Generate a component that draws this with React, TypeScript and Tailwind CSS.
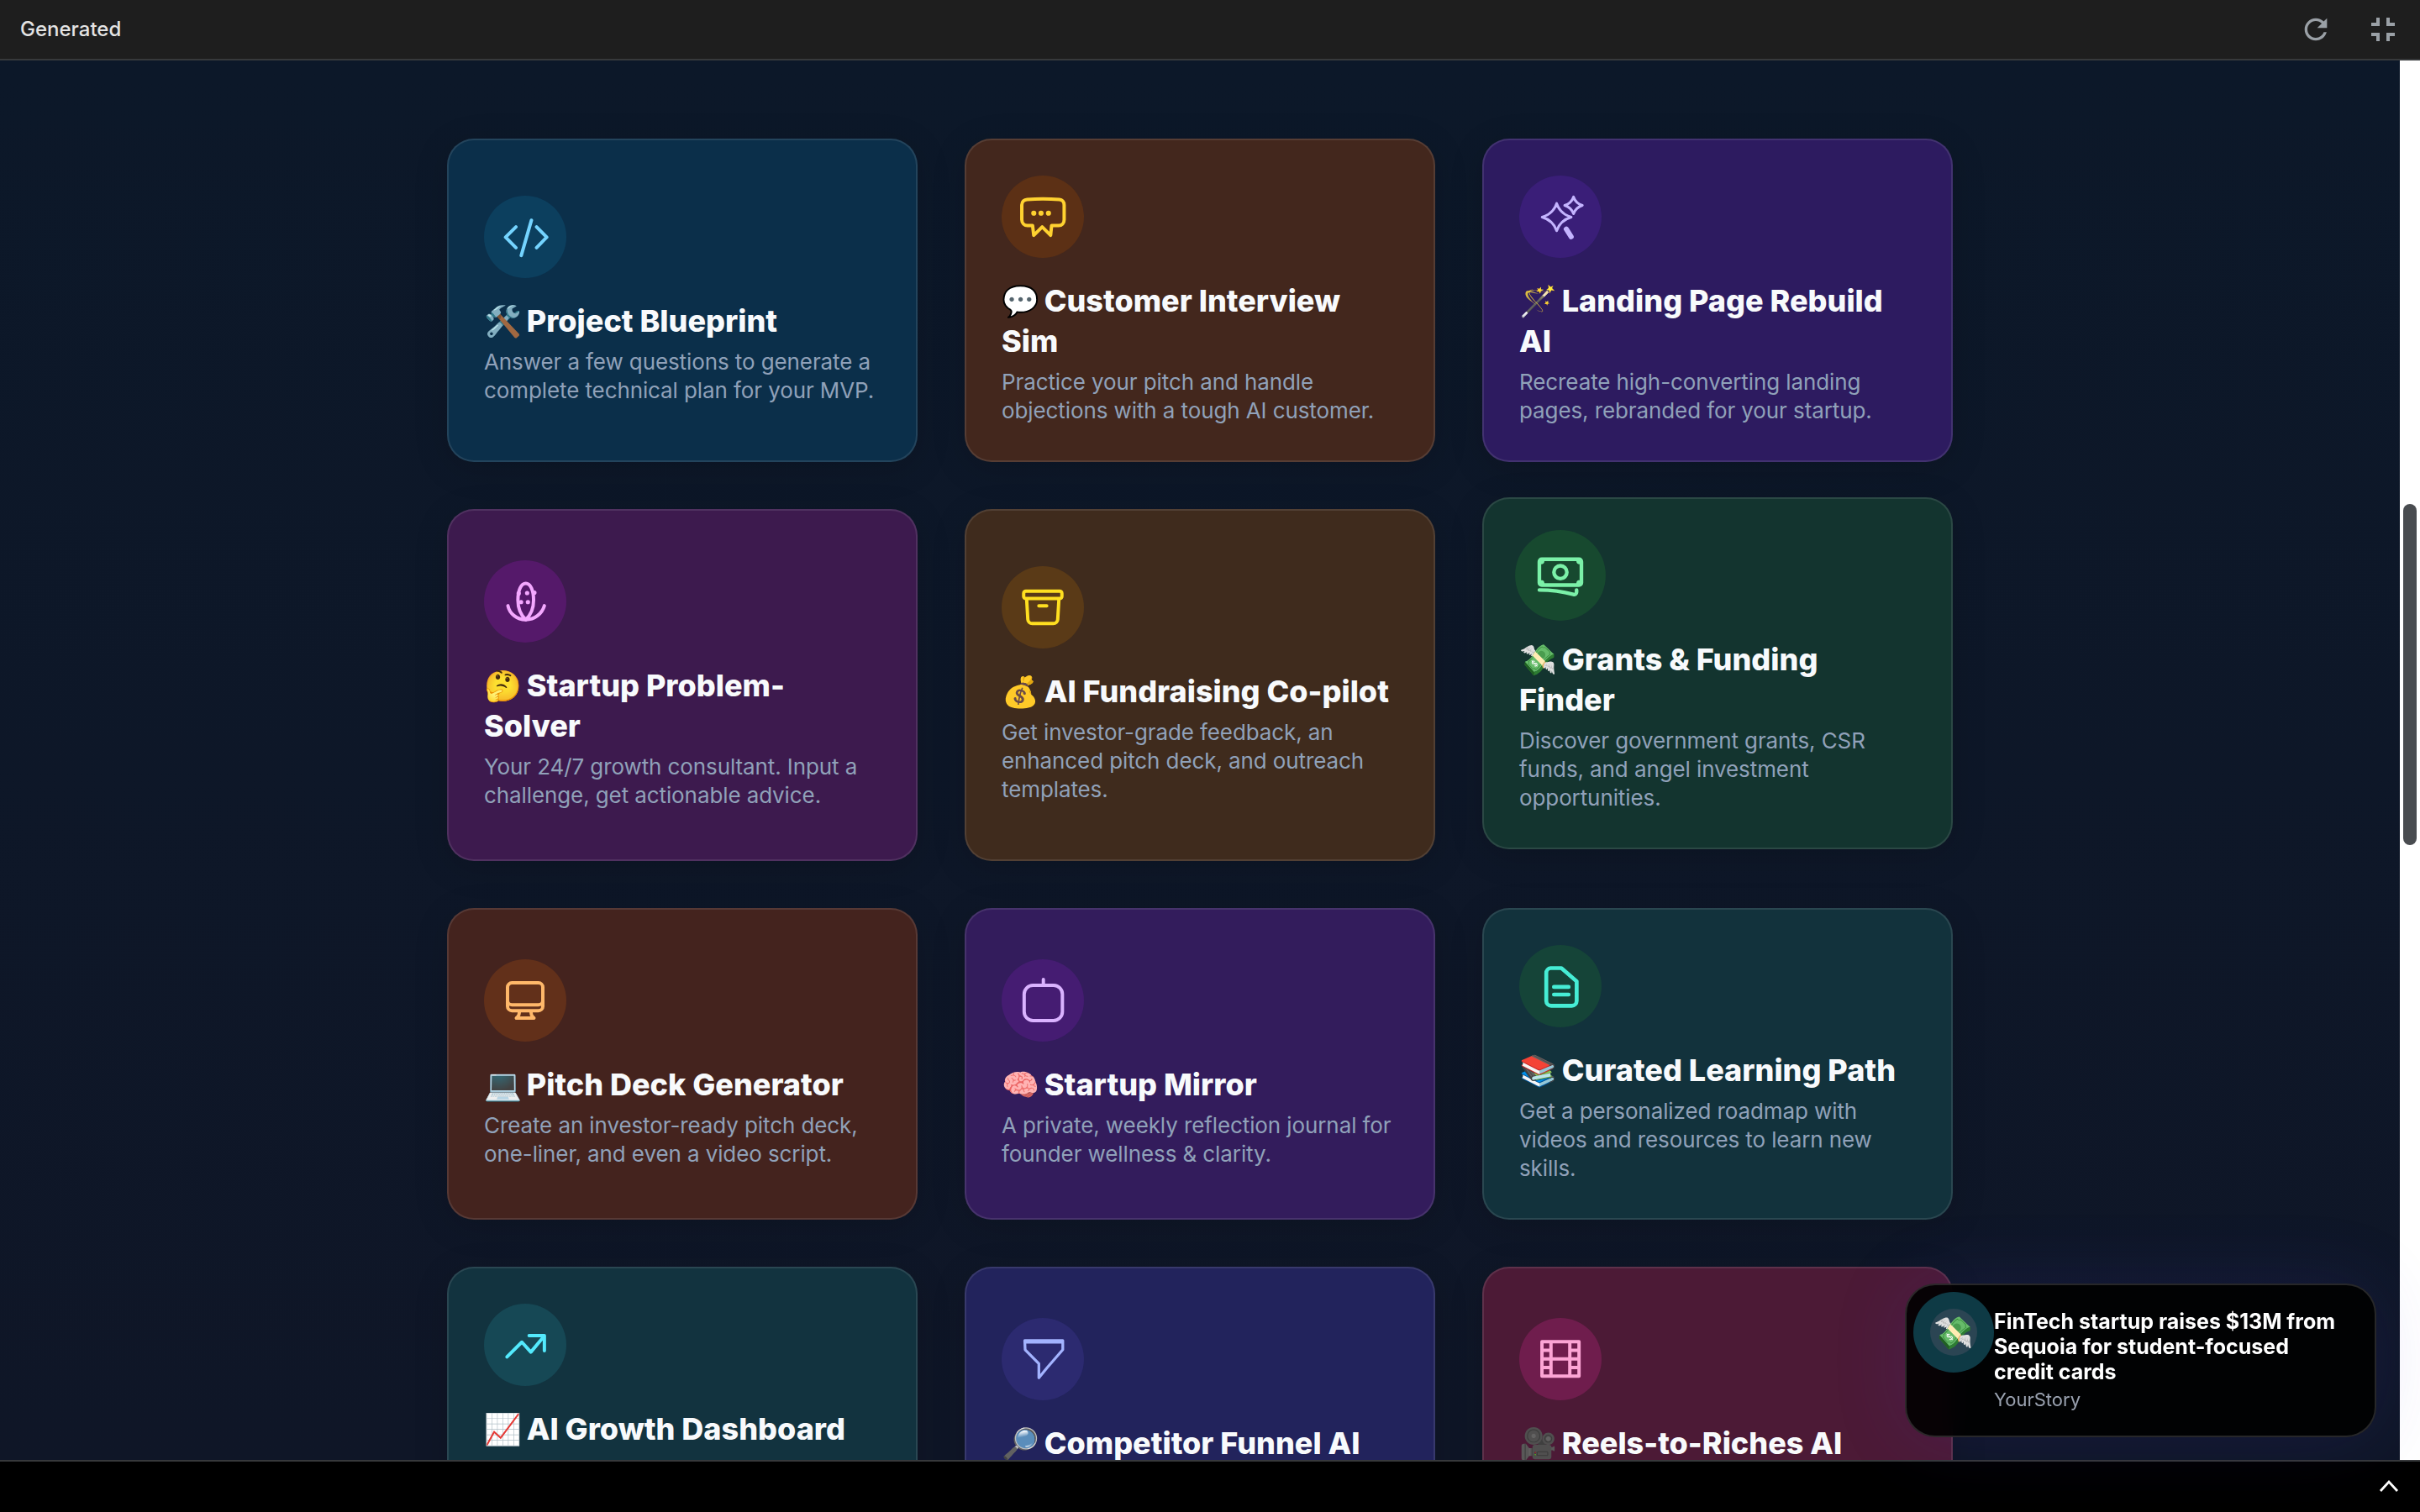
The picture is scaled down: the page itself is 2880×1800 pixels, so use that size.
import React from 'react';

/* paths sit in a 24 box and are stroked with currentColor */
const ICONS: Record<string, React.ReactNode> = {
  code: <path d="M17.800 6.900 23 12.200l-5.200 5.300M7.300 17.500 2 12.200l5.300-5.300M15.200 3.500 10 21.500" />,
  chat: (
    <>
      <path d="M4 3.200c5-.4 11-.4 16.500 0 1.300.1 2.400 1 2.400 2.800v7.500c0 1.800-1.200 3-2.800 3h-3.600l-.5 5-4.300-4.300-4.300 4.300-.6-5H4.200c-1.600 0-2.900-1.200-2.900-3V6c0-1.800 1.300-2.700 2.700-2.800z" />
      <path strokeWidth="2.600" d="M7.400 10.200h.01M11.100 10.200h.01M14.900 10.200h.01" />
    </>
  ),
  sparkles: (
    <g strokeWidth="1.300">
      <path d="M10.100 5.200Q11.800 10.500 17.500 12.200 11.800 13.900 10.100 19.200 8.400 13.900 2.700 12.200 8.400 10.500 10.100 5.200z" />
      <path d="M18.700 1.900Q19.800 5.100 23.200 6.200 19.800 7.300 18.700 10.500 17.600 7.300 14.200 6.200 17.600 5.100 18.700 1.900z" />
      <path strokeWidth="2.600" d="M15 18.300l2.500 3.900" />
    </g>
  ),
  bulb: (
    <>
      <path d="M12.300 2.800c-2.400 0-4 3.500-4 8.500s1.800 8 4 10c2.200-2 4-5 4-10s-1.600-8.500-4-8.500z" />
      <path d="M3.200 14.200c.8 4 4.500 7.100 9.100 7.100s8.300-3.100 9.500-7.100" />
      <path strokeWidth="2.200" d="M13 7.700h.01M9.900 12.300h.01M13.400 12.300h.01M8.700 7.900h.01M16.700 7.500h.01" />
    </>
  ),
  archive: <path d="M20.250 7.500l-.625 10.632a2.250 2.250 0 0 1-2.247 2.118H6.622a2.250 2.250 0 0 1-2.247-2.118L3.750 7.500M10 11.250h4M3.375 7.500h17.250c.621 0 1.125-.504 1.125-1.125v-1.500c0-.621-.504-1.125-1.125-1.125H3.375c-.621 0-1.125.504-1.125 1.125v1.500c0 .621.504 1.125 1.125 1.125z" />,
  money: <path d="M2.250 18.750a60.070 60.070 0 0 1 15.797 2.101c.727.198 1.453-.342 1.453-1.096V18.750M3.750 4.500v.750A.750.750 0 0 1 3 6h-.750m0 0v-.375c0-.621.504-1.125 1.125-1.125H20.250M2.250 6v9m18-10.500v.750c0 .414.336.750.750.750h.750m-1.500-1.500h.375c.621 0 1.125.504 1.125 1.125v9.750c0 .621-.504 1.125-1.125 1.125h-.375m1.500-1.500H21a.750.750 0 0 0-.750.750v.750m0 0H3.750m0 0h-.375a1.125 1.125 0 0 1-1.125-1.125V15m1.500 1.500v-.750A.750.750 0 0 0 3 15h-.750M15 10.500a3 3 0 1 1-6 0 3 3 0 0 1 6 0z" />,
  desktop: <path d="M9 17.250v1.007a3 3 0 0 1-.879 2.122L7.500 21h9l-.621-.621A3 3 0 0 1 15 18.257V17.250m6-12V15a2.250 2.250 0 0 1-2.250 2.250H5.250A2.250 2.250 0 0 1 3 15V5.250m18 0A2.250 2.250 0 0 0 18.750 3H5.250A2.250 2.250 0 0 0 3 5.250m18 0V12a2.250 2.250 0 0 1-2.250 2.250H5.250A2.250 2.250 0 0 1 3 12V5.250" />,
  mirror: <path d="M12.300 1.300v3M7 4.300h10.600A4.500 4.500 0 0 1 22 8.800v9a4.500 4.500 0 0 1-4.500 4.500H7a4.500 4.500 0 0 1-4.500-4.500v-9A4.500 4.500 0 0 1 7 4.300z" />,
  doc: <path strokeWidth="2" d="M7 2.800h5.500l7.800 6.700v10a2.500 2.500 0 0 1-2.500 2.500H7.300a2.500 2.500 0 0 1-2.500-2.500V5.300A2.500 2.500 0 0 1 7 2.800zM8.700 12.400h7.500M8.700 16.300h7.500" />,
  trend: <path d="M2.700 18.200 10.300 10.600l4.600 5.100 6.900-8.300M14 7.300h7.800V15" />,
  funnel: <path strokeWidth="1.400" d="M2.800 2.500h19.400v4.700l-8 9.200-4.200 5.100v-7.200L3 7.200zM3 3.400h19" />,
  film: <path d="M2.600 3.100h18.900v17.600H2.600zM7.200 3.100v17.600M16.800 3.100v17.600M7.200 11.900h9.600M2.600 7.500h4.600M2.600 11.900h4.600M2.600 16.300h4.600M16.800 7.500h4.700M16.800 11.900h4.700M16.800 16.300h4.700" />,
};

type Tool = {
  icon: string;
  emoji: string;
  title: string;
  desc: string;
  card: string;
  disc: string;
  stroke: string;
  lifted?: boolean;
};

const TOOLS: Tool[] = [
  { icon: 'code', emoji: '🛠️', title: 'Project Blueprint', desc: 'Answer a few questions to generate a complete technical plan for your MVP.', card: 'bg-[#0b2f4a]', disc: 'bg-[#0c3f5e]', stroke: 'text-sky-300' },
  { icon: 'chat', emoji: '💬', title: 'Customer Interview Sim', desc: 'Practice your pitch and handle objections with a tough AI customer.', card: 'bg-[#43271d]', disc: 'bg-[#5c3015]', stroke: 'text-amber-300' },
  { icon: 'sparkles', emoji: '🪄', title: 'Landing Page Rebuild AI', desc: 'Recreate high-converting landing pages, rebranded for your startup.', card: 'bg-[#2d1b60]', disc: 'bg-[#3a1e78]', stroke: 'text-violet-300' },
  { icon: 'bulb', emoji: '🤔', title: 'Startup Problem-\nSolver', desc: 'Your 24/7 growth consultant. Input a challenge, get actionable advice.', card: 'bg-[#3d1a4e]', disc: 'bg-[#55196a]', stroke: 'text-fuchsia-300' },
  { icon: 'archive', emoji: '💰', title: 'AI Fundraising Co-pilot', desc: 'Get investor-grade feedback, an enhanced pitch deck, and outreach templates.', card: 'bg-[#3f2b1d]', disc: 'bg-[#5a3a17]', stroke: 'text-yellow-300' },
  { icon: 'money', emoji: '💸', title: 'Grants & Funding Finder', desc: 'Discover government grants, CSR funds, and angel investment opportunities.', card: 'bg-[#13342f]', disc: 'bg-[#17492f]', stroke: 'text-green-300', lifted: true },
  { icon: 'desktop', emoji: '💻', title: 'Pitch Deck Generator', desc: 'Create an investor-ready pitch deck, one-liner, and even a video script.', card: 'bg-[#44231e]', disc: 'bg-[#62301a]', stroke: 'text-orange-300' },
  { icon: 'mirror', emoji: '🧠', title: 'Startup Mirror', desc: 'A private, weekly reflection journal for founder wellness & clarity.', card: 'bg-[#331c5c]', disc: 'bg-[#451c72]', stroke: 'text-purple-300' },
  { icon: 'doc', emoji: '📚', title: 'Curated Learning Path', desc: 'Get a personalized roadmap with videos and resources to learn new skills.', card: 'bg-[#12323c]', disc: 'bg-[#154438]', stroke: 'text-teal-300' },
  { icon: 'trend', emoji: '📈', title: 'AI Growth Dashboard', desc: 'Track your key metrics, spot what is working, and get weekly growth suggestions from AI.', card: 'bg-[#12333f]', disc: 'bg-[#164855]', stroke: 'text-cyan-300' },
  { icon: 'funnel', emoji: '🔎', title: 'Competitor Funnel AI', desc: 'Reverse engineer the funnels and positioning of your competitors.', card: 'bg-[#22235c]', disc: 'bg-[#2c2a70]', stroke: 'text-indigo-300' },
  { icon: 'film', emoji: '🎥', title: 'Reels-to-Riches AI', desc: 'Turn your founder story into short videos that bring in customers.', card: 'bg-[#4c1a36]', disc: 'bg-[#6f1d4d]', stroke: 'text-pink-300' },
];

function ToolCard({ tool }: { tool: Tool }) {
  return (
    <div className={`flex flex-col justify-center rounded-[32px] border-2 border-white/10 p-[42px] shadow-[0_8px_40px_rgba(0,0,0,0.15)] ${tool.card} ${tool.lifted ? '-translate-y-[14px]' : ''}`}>
      <div className={`flex h-[98px] w-[98px] items-center justify-center rounded-full ${tool.disc} ${tool.lifted ? 'scale-110' : ''}`}>
        <svg viewBox="0 0 24 24" fill="none" stroke="currentColor" strokeWidth="1.700" strokeLinecap="round" strokeLinejoin="round" className={`h-14 w-14 ${tool.stroke}`}>
          {ICONS[tool.icon]}
        </svg>
      </div>
      <h3 className="mt-[27px] text-[36px] leading-[48px] font-extrabold whitespace-pre-line text-slate-50">
        <span className="-mr-0.5">{tool.emoji}</span> {tool.title}
      </h3>
      <p className="mt-2 text-[26px] leading-[34px] tracking-[-0.1px] text-slate-400">{tool.desc}</p>
    </div>
  );
}

export default function App() {
  return (
    <div className="relative flex h-screen flex-col overflow-hidden bg-black font-['Inter','Noto_Color_Emoji',sans-serif]">
      <header className="flex h-[72px] shrink-0 items-center justify-between border-b-2 border-[#37393b] bg-[#1e1e1e] pr-5 pl-6">
        <span className="text-[24px] font-medium text-[#e3e3e3]">Generated</span>
        <div className="flex items-center gap-9 text-[#9aa0a6]">
          <svg viewBox="0 0 24 24" fill="currentColor" className="h-10 w-10">
            <path d="M17.65 6.35C16.2 4.9 14.21 4 12 4c-4.42 0-7.99 3.58-7.99 8s3.57 8 7.99 8c3.73 0 6.84-2.55 7.73-6h-2.08c-.82 2.33-3.04 4-5.65 4-3.31 0-6-2.69-6-6s2.69-6 6-6c1.66 0 3.14.69 4.22 1.78L13 11h7V4l-2.35 2.35z" />
          </svg>
          <svg viewBox="0 0 24 24" fill="currentColor" className="h-12 w-12">
            <path d="M5 16h3v3h2v-5H5v2zm3-8H5v2h5V5H8v3zm6 11h2v-3h3v-2h-5v5zm2-11V5h-2v5h5V8h-3z" />
          </svg>
        </div>
      </header>

      <div className="flex min-h-0 flex-1 bg-white">
        <main className="min-w-0 flex-1 overflow-hidden bg-gradient-to-b from-[#0c1829] to-[#0f1627] pt-[93px]">
          <div className="ml-[532px] grid w-[1792px] grid-cols-3 gap-14">
            {TOOLS.map((tool) => (
              <ToolCard key={tool.title} tool={tool} />
            ))}
          </div>
        </main>
        <div className="w-6 shrink-0 pt-[528px] pl-1">
          <div className="h-[406px] w-4 rounded-lg bg-[#494c50]" />
        </div>
      </div>

      <footer className="flex h-[62px] shrink-0 items-center justify-end border-t-2 border-[#37393b] bg-black pr-[25px]">
        <svg viewBox="0 0 24 24" fill="none" stroke="white" strokeWidth="2.800" className="h-6 w-6">
          <path d="M2 17 12 6l10 11" />
        </svg>
      </footer>

      {/* news toast over the grid */}
      <div className="absolute right-[52px] bottom-[89px] flex h-[183px] w-[561px] items-start rounded-[36px] border-2 border-white/15 bg-black/90 pt-2 pl-2 shadow-[0_0_90px_rgba(70,60,200,0.14)] backdrop-blur-md">
        <div className="flex h-[96px] w-[96px] shrink-0 items-center justify-center rounded-full bg-[#0e3a45]">
          <div className="flex h-14 w-14 items-center justify-center rounded-full bg-[#2b4553] text-[38px]">💸</div>
        </div>
        <div className="pt-5 pr-8">
          <p className="text-[25px] leading-[30px] font-bold text-white">FinTech startup raises $13M from Sequoia for student-focused credit cards</p>
          <p className="mt-0.5 text-[22px] leading-8 text-gray-400">YourStory</p>
        </div>
      </div>
    </div>
  );
}
